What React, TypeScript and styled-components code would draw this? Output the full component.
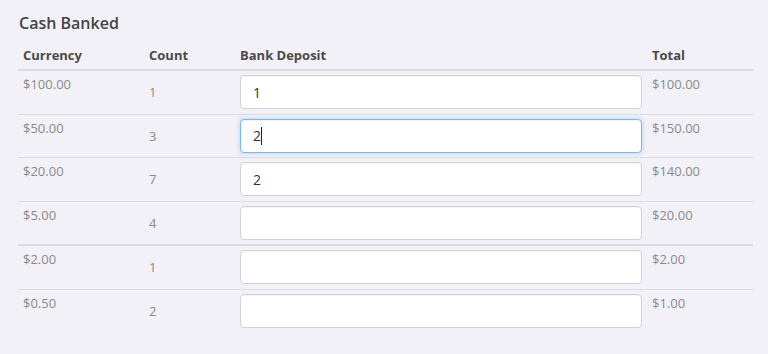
import styled, { createGlobalStyle, css } from 'styled-components';

const GlobalStyle = createGlobalStyle`
    html, body {
        margin: 0;
        padding: 0;
        background-color: #f2f1f7;
        font-family: "Open Sans", "Liberation Sans", sans-serif;
    }
`

const Page = styled.div`
    padding: 13px 15px 0 18px;
    width: 735px;
`

const Title = styled.h3`
    margin: 0 0 8px 1px;
    font-size: 16px;
    line-height: 20px;
    font-weight: 600;
    color: #444444;
`

const Table = styled.table`
    width: 735px;
    table-layout: fixed;
    border-collapse: collapse;
    border-spacing: 0;
`

const HeadCell = styled.th<{ $width?: number }>`
    width: ${props => props.$width ? props.$width + 'px' : 'auto'};
    text-align: left;
    padding: 5px;
    font-size: 13px;
    line-height: 18px;
    font-weight: 700;
    color: #4a4a4a;
    border-bottom: 2px solid #dcdbe0;
`

const Row = styled.tr<{ $split?: boolean }>`
    border-top: ${props => props.$split ? '2px' : '1px'} solid #dcdbe0;

    &:first-child {
        border-top: 0;
    }
`

const Cell = styled.td<{ $middle?: boolean }>`
    padding: 4px 5px 4.5px 5px;
    font-size: 13px;
    line-height: 18px;
    color: #8a8a8a;
    vertical-align: ${props => props.$middle ? 'middle' : 'top'};
`

const InputWrap = styled.div`
    position: relative;
`

const DepositInput = styled.input<{ $active?: boolean }>`
    display: block;
    box-sizing: border-box;
    width: 100%;
    height: 34px;
    padding: 6px 12px;
    font-family: "Open Sans", "Liberation Sans", sans-serif;
    font-size: 14px;
    color: #333333;
    background-color: #ffffff;
    border: 1px solid #d2d2d6;
    border-radius: 4px;
    box-shadow: inset 0 1px 1px rgba(0,0,0,0.05);
    outline: none;
    caret-color: transparent;

    ${props => props.$active && css`
        border-color: #7fb8e6;
        box-shadow: inset 0 1px 1px rgba(0,0,0,0.05), 0 0 4px rgba(102,175,233,0.5);
    `}
`

// text cursor shown in the focused field
const Caret = styled.span`
    position: absolute;
    left: 21px;
    top: 8px;
    width: 1px;
    height: 18px;
    background-color: #222222;
`

const rows = [
    { currency: '$100.00', count: 1, deposit: '1', total: '$100.00' },
    { currency: '$50.00', count: 3, deposit: '2', total: '$150.00', active: true },
    { currency: '$20.00', count: 7, deposit: '2', total: '$140.00' },
    { currency: '$5.00', count: 4, deposit: '', total: '$20.00' },
    { currency: '$2.00', count: 1, deposit: '', total: '$2.00', split: true },
    { currency: '$0.50', count: 2, deposit: '', total: '$1.00' },
];

const App = () => {
    return (
        <Page>
            <GlobalStyle />
            <Title>Cash Banked</Title>
            <Table>
                <thead>
                    <tr>
                        <HeadCell $width={116}>Currency</HeadCell>
                        <HeadCell $width={81}>Count</HeadCell>
                        <HeadCell $width={402}>Bank Deposit</HeadCell>
                        <HeadCell>Total</HeadCell>
                    </tr>
                </thead>
                <tbody>
                    {rows.map((item, index) => (
                        <Row key={index} $split={item.split}>
                            <Cell>{item.currency}</Cell>
                            <Cell $middle>{item.count}</Cell>
                            <Cell>
                                <InputWrap>
                                    <DepositInput type='text' defaultValue={item.deposit} $active={item.active} />
                                    {item.active && <Caret />}
                                </InputWrap>
                            </Cell>
                            <Cell>{item.total}</Cell>
                        </Row>
                    ))}
                </tbody>
            </Table>
        </Page>
    )
};

export default App;
